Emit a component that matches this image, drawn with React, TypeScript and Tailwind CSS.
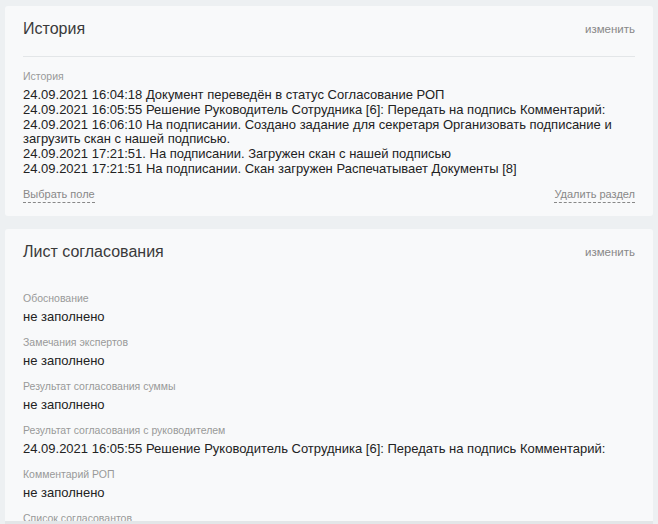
const history = [
  "24.09.2021 16:04:18 Документ переведён в статус Согласование РОП",
  "24.09.2021 16:05:55 Решение Руководитель Сотрудника [6]: Передать на подпись Комментарий:",
  "24.09.2021 16:06:10 На подписании. Создано задание для секретаря Организовать подписание и загрузить скан с нашей подписью.",
  "24.09.2021 17:21:51. На подписании. Загружен скан с нашей подписью",
  "24.09.2021 17:21:51 На подписании. Скан загружен Распечатывает Документы [8]",
];

const fields = [
  { label: "Обоснование", value: "не заполнено" },
  { label: "Замечания экспертов", value: "не заполнено" },
  { label: "Результат согласования суммы", value: "не заполнено" },
  {
    label: "Результат согласования с руководителем",
    value: "24.09.2021 16:05:55 Решение Руководитель Сотрудника [6]: Передать на подпись Комментарий:",
  },
  { label: "Комментарий РОП", value: "не заполнено" },
  { label: "Список согласовантов", value: "" },
];

const CardHeader = ({ title }: { title: string }) => (
  <div className="flex items-center justify-between">
    <h2 className="text-[16px] leading-5 text-[#3a3a3a]">{title}</h2>
    <button className="text-[11.5px] leading-4 text-[#888]">изменить</button>
  </div>
);

export default function App() {
  return (
    <div
      className="flex h-[524px] flex-col gap-[13px] overflow-hidden bg-[#edf0f2] px-[5px] pt-[6px]"
      style={{ fontFamily: '"Liberation Sans", Arial, sans-serif' }}
    >
      <section className="rounded-[3px] bg-[#f8f9fa] px-[18px] pt-[13px] pb-[13px]">
        <CardHeader title="История" />
        <div className="mt-[17px] border-t border-[#e3e6e8]" />
        <div className="mt-[13px] text-[10.5px] leading-3 text-[#999]">История</div>
        <div className="mt-[6px] text-[13px] leading-[14.8px] text-[#222]">
          {history.map((line) => (
            <div key={line}>{line}</div>
          ))}
        </div>
        <div className="mt-[9px] flex justify-between text-[11px] leading-4 text-[#888]">
          <span className="border-b border-dashed border-[#888]">Выбрать поле</span>
          <span className="border-b border-dashed border-[#888]">Удалить раздел</span>
        </div>
      </section>

      <section className="relative flex-1 rounded-t-[3px] bg-[#f8f9fa] px-[18px] pt-[13px]">
        <CardHeader title="Лист согласования" />
        <div className="mt-[30px] flex flex-col gap-[12px]">
          {fields.map((f) => (
            <div key={f.label}>
              <div className="text-[10.5px] leading-3 text-[#999]">{f.label}</div>
              <div className="mt-[5px] text-[13px] leading-[15px] text-[#222]">{f.value}</div>
            </div>
          ))}
        </div>
        <div className="absolute inset-x-0 top-[292px] h-[4px] bg-[#e3e6e8]" />
      </section>
    </div>
  );
}
